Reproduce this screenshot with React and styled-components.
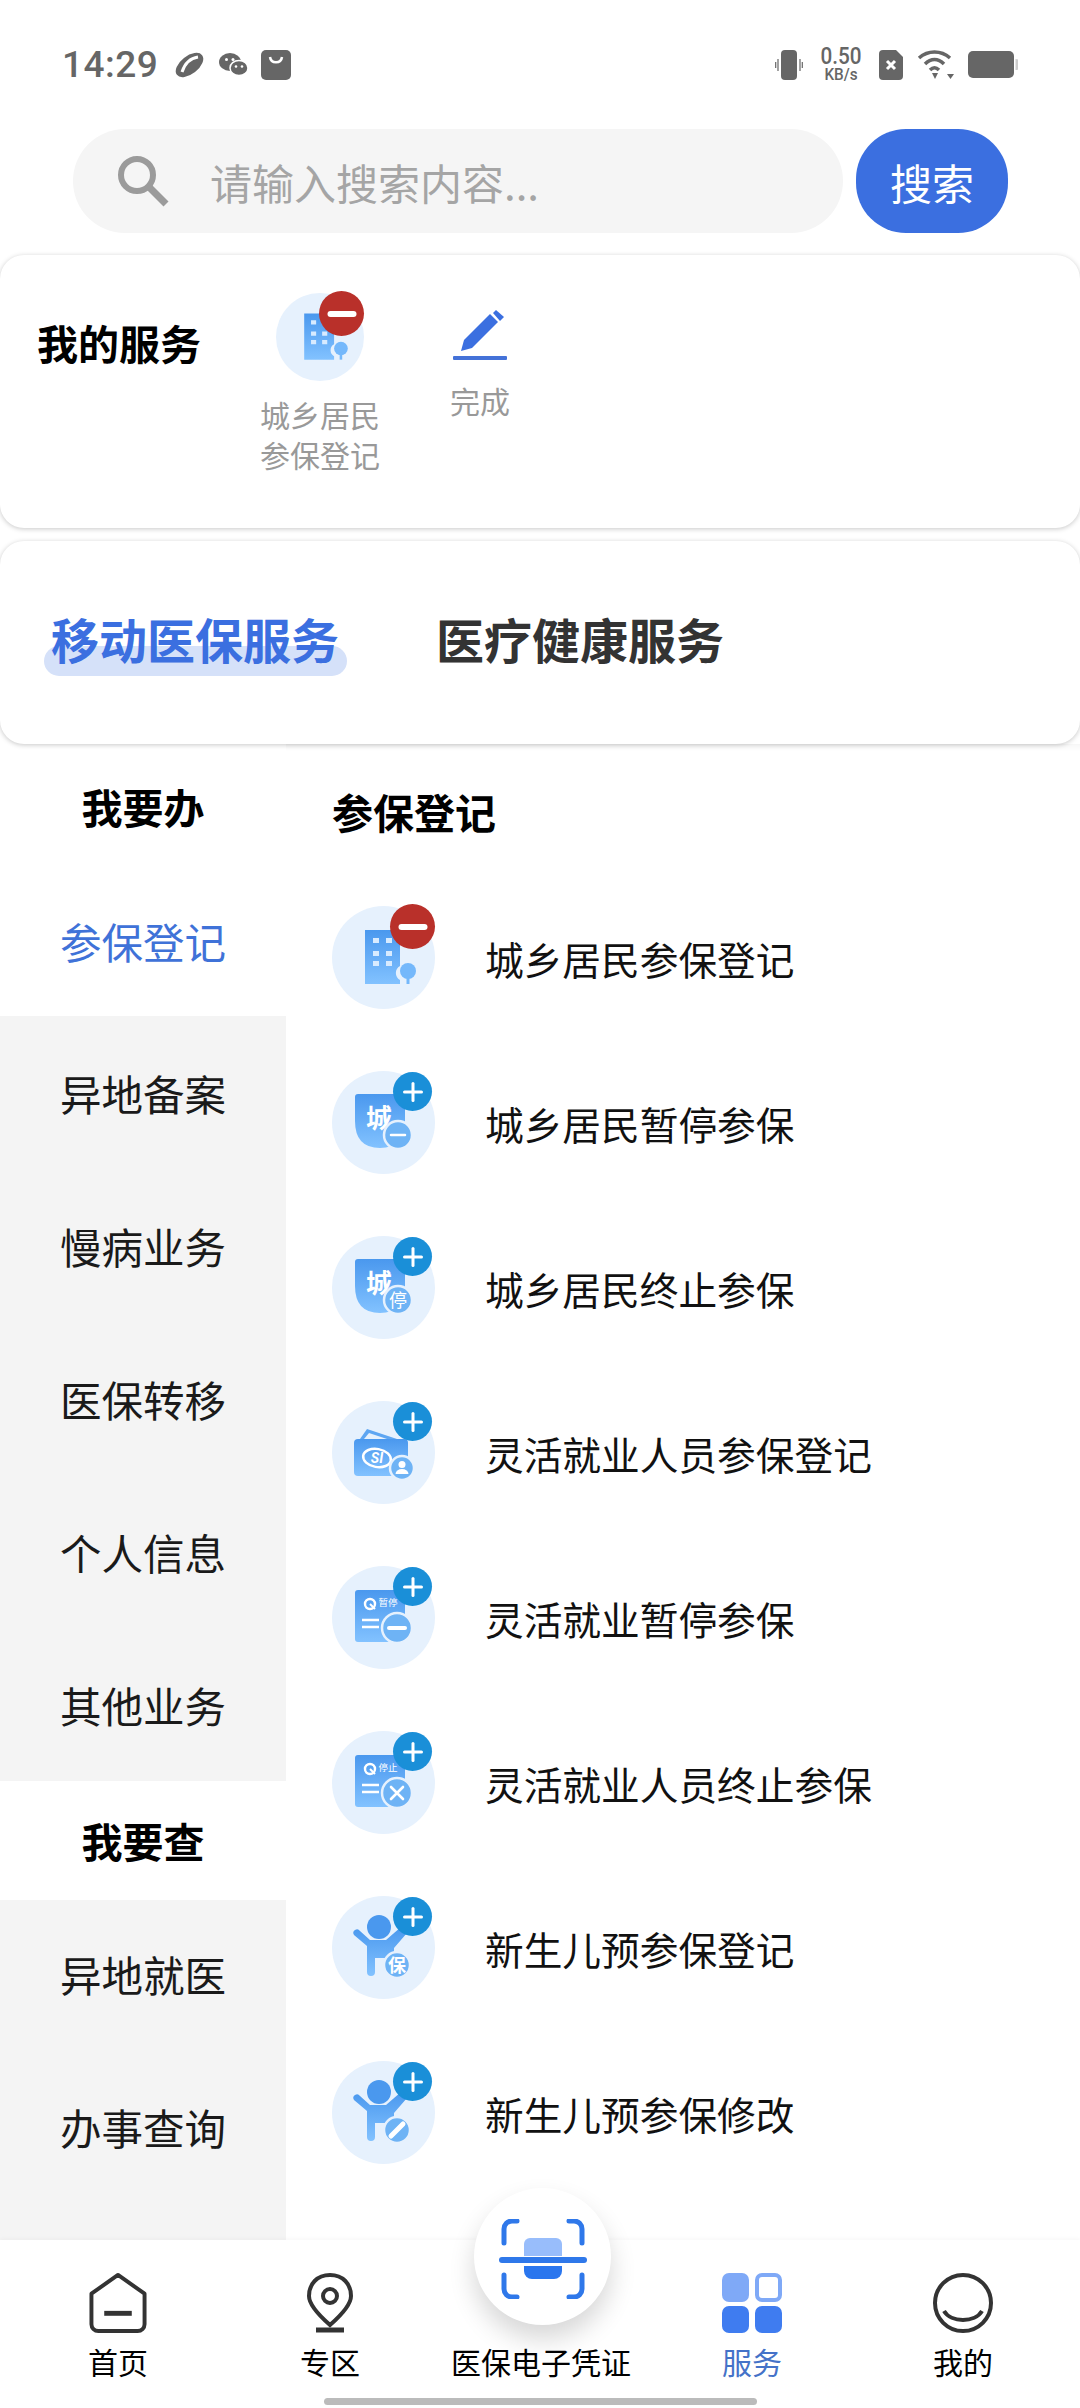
import React from "react";
import styled, { createGlobalStyle } from "styled-components";

const BLUE = "#3b6fe0";
const CJK = `"Noto Sans CJK SC", "Noto Sans", sans-serif`;

const GlobalStyle = createGlobalStyle`
  html, body {
    margin: 0;
    padding: 0;
    background: #fff;
  }
  * {
    box-sizing: border-box;
  }
`;

const Page = styled.div`
  position: relative;
  width: 1080px;
  height: 2408px;
  display: flex;
  flex-direction: column;
  overflow: hidden;
  background: #fff;
  font-family: ${CJK};
`;

const StatusBar = styled.div`
  flex: none;
  height: 129px;
  display: flex;
  align-items: center;
  justify-content: space-between;
  padding: 0 62px;
  color: #666;
`;

const StatusGroup = styled.div`
  display: flex;
  align-items: center;
  gap: ${(p) => p.$gap || 13}px;
`;

const Clock = styled.span`
  font-family: Roboto, sans-serif;
  font-size: 37px;
  font-weight: 500;
  letter-spacing: 0.5px;
  margin-right: 2px;
`;

const Speed = styled.div`
  font-family: Roboto, sans-serif;
  font-weight: 500;
  display: flex;
  flex-direction: column;
  align-items: center;
  width: 48px;
  line-height: 20px;
  font-size: 23px;
  white-space: nowrap;
  transform: scaleX(0.9);

  small {
    font-size: 17px;
    line-height: 15px;
  }
`;

const SearchRow = styled.div`
  flex: none;
  height: 104px;
  display: flex;
  gap: 13px;
  padding: 0 72px 0 73px;
`;

const SearchBox = styled.div`
  flex: 1;
  display: flex;
  align-items: center;
  gap: 41px;
  padding-left: 44px;
  background: #f5f5f5;
  border-radius: 52px;
  color: #a5a5a5;
  font-size: 42px;
`;

const SearchButton = styled.button`
  width: 152px;
  border: none;
  padding: 0;
  background: ${BLUE};
  border-radius: 50px;
  color: #fff;
  font-family: ${CJK};
  font-size: 42px;
`;

const Card = styled.section`
  flex: none;
  height: ${(p) => p.$height}px;
  margin-top: ${(p) => p.$top}px;
  background: #fff;
  border-radius: 24px;
  box-shadow: 0 1px 5px rgba(0, 0, 0, 0.22);
  position: relative;
`;

const MyServiceCard = styled(Card)`
  display: flex;
  padding-left: 37px;
  gap: 20px;
`;

const MyServiceTitle = styled.h2`
  margin: 0 29px 0 0;
  padding-top: 57px;
  width: 164px;
  font-size: 41px;
  line-height: 60px;
  font-weight: 700;
  color: #000;
  white-space: nowrap;
`;

const ServiceTile = styled.div`
  width: 140px;
  display: flex;
  flex-direction: column;
  align-items: center;
  padding-top: ${(p) => p.$top}px;
`;

const TileLabel = styled.div`
  margin-top: ${(p) => p.$gap}px;
  font-size: 30px;
  line-height: 40px;
  color: #999;
  text-align: center;
`;

const TabsCard = styled(Card)`
  display: flex;
  align-items: center;
  gap: 97px;
  padding: 0 0 10px 51px;
`;

const Tab = styled.div`
  position: relative;
  font-size: 48px;
  font-weight: 700;
  line-height: 64px;
  white-space: nowrap;
  color: ${(p) => (p.$active ? BLUE : "#333")};
  z-index: 0;

  ${(p) =>
    p.$active &&
    `
    &::after {
      content: "";
      position: absolute;
      left: -7px;
      right: -8px;
      bottom: -6px;
      height: 30px;
      border-radius: 15px;
      background: #d5e1f9;
      z-index: -1;
    }
  `}
`;

const Body = styled.div`
  flex: 1;
  min-height: 0;
  display: flex;
`;

const Sidebar = styled.nav`
  flex: none;
  width: 286px;
  background: #f4f4f4;
  display: flex;
  flex-direction: column;
`;

const SideHeading = styled.div`
  height: ${(p) => p.$height}px;
  display: flex;
  align-items: center;
  justify-content: center;
  padding-bottom: ${(p) => p.$pad || 0}px;
  background: #fff;
  color: #000;
  font-size: 41px;
  font-weight: 700;
`;

const SideItem = styled.div`
  height: ${(p) => (p.$active ? 146 : 153)}px;
  display: flex;
  align-items: center;
  justify-content: center;
  padding-bottom: ${(p) => p.$pad || 0}px;
  background: ${(p) => (p.$active ? "#fff" : "transparent")};
  color: ${(p) => (p.$active ? "#3f72d8" : "#1a1a1a")};
  font-size: 41.500px;
`;

const ContentPane = styled.main`
  flex: 1;
  min-width: 0;
  padding: 40px 0 0 46px;
  overflow: hidden;
  box-shadow: inset 0 12px 10px -12px rgba(0, 0, 0, 0.07);
`;

const SectionTitle = styled.h3`
  margin: 0 0 37px;
  font-size: 41px;
  line-height: 54px;
  font-weight: 700;
  color: #000;
`;

const Row = styled.div`
  height: 165px;
  display: flex;
  align-items: center;
  gap: 50px;
`;

const RowText = styled.span`
  font-size: 38.700px;
  color: #111;
  white-space: nowrap;
`;

const IconWrap = styled.div`
  position: relative;
  flex: none;
  width: ${(p) => p.$size}px;
  height: ${(p) => p.$size}px;

  svg {
    display: block;
  }
`;

const Badge = styled.span`
  position: absolute;
  border-radius: 50%;
  width: ${(p) => (p.$remove ? 45 : 39)}px;
  height: ${(p) => (p.$remove ? 45 : 39)}px;
  top: ${(p) => (p.$remove ? -2 : 1)}px;
  right: ${(p) => (p.$remove ? 0 : 3)}px;
  background: ${(p) => (p.$remove ? "#b9302a" : "#1a8fd8")};

  &::before,
  &::after {
    content: "";
    position: absolute;
    left: 50%;
    top: 50%;
    border-radius: 3px;
    background: #fff;
    transform: translate(-50%, -50%);
  }

  &::before {
    width: ${(p) => (p.$remove ? 29 : 20)}px;
    height: ${(p) => (p.$remove ? 6 : 3)}px;
  }

  &::after {
    width: 3px;
    height: 20px;
    display: ${(p) => (p.$remove ? "none" : "block")};
  }
`;

const BottomNav = styled.footer`
  flex: none;
  height: 168px;
  display: grid;
  grid-template-columns: 236px 188px 234px 188px 234px;
  padding-top: 33px;
  background: #fff;
  box-shadow: 0 -1px 4px rgba(0, 0, 0, 0.04);
  position: relative;
  z-index: 1;
`;

const NavItem = styled.div`
  display: flex;
  flex-direction: column;
  align-items: center;
  height: 108px;
  justify-content: flex-end;
  gap: 8px;
  font-size: 30px;
  line-height: 40px;
  white-space: nowrap;
  color: ${(p) => (p.$active ? "#4472c8" : "#000")};
`;

const NavSpacer = styled.span`
  height: 60px;
`;

const ScanButton = styled.div`
  position: absolute;
  left: 474px;
  top: -52px;
  width: 137px;
  height: 137px;
  padding-top: 4px;
  border-radius: 50%;
  background: #fff;
  box-shadow: 0 14px 26px rgba(0, 0, 0, 0.16);
  display: flex;
  align-items: center;
  justify-content: center;
`;

const HomeBar = styled.div`
  position: absolute;
  left: 324px;
  bottom: 3px;
  width: 433px;
  height: 7px;
  border-radius: 4px;
  background: #bbb;
`;

const Grad = () => (
  <defs>
    <linearGradient id="svcGrad" x1="0" y1="0" x2="0" y2="1">
      <stop offset="0" stopColor="#4a98ee" />
      <stop offset="1" stopColor="#82c2ff" />
    </linearGradient>
  </defs>
);

const SubCircle = ({ cx, cy, r, children }) => (
  <g>
    <circle cx={cx} cy={cy} r={r} fill="#6eb3f5" stroke="#e6f1fd" strokeWidth="2.5" />
    {children}
  </g>
);

const shield = "M23 26q0-3 3-3H73V50Q73 77 48 77Q23 77 23 50Z";
const child = "M22 39a3.6 3.6 0 0 1 6-4L38 44H54L69 31L75 37L62 52V62H43V76a4 4 0 0 1-8 0V50Z";

const Glyph = ({ x, y, size, weight = 700, fill = "#fff", children }) => (
  <text x={x} y={y} fontSize={size} fontWeight={weight} fill={fill} textAnchor="middle" fontFamily={CJK}>
    {children}
  </text>
);

const formCard = (label, mark) => (
  <g>
    <rect x="23" y="24" width="50" height="52" rx="3" fill="url(#svcGrad)" />
    <circle cx="38" cy="38" r="5" fill="none" stroke="#fff" strokeWidth="2.4" />
    <path d="M38 38L43 43" stroke="#fff" strokeWidth="2" />
    <Glyph x="56" y="40" size="9.500" weight={400}>{label}</Glyph>
    <path d="M30 54H47M30 61H47" stroke="#fff" strokeWidth="2.4" />
    <SubCircle cx={65} cy={62} r={15}>{mark}</SubCircle>
  </g>
);

const artwork = {
  building: (
    <g>
      <path d="M33 24H68V60A8 8 0 0 0 68 74V78H33Z" fill="url(#svcGrad)" />
      <path
        d="M41 32h6v5h-6zM54 32h6v5h-6zM41 45h6v5h-6zM54 45h6v5h-6zM41 55h6v5h-6zM54 55h6v5h-6z"
        fill="#d8ebff"
      />
      <circle cx="76" cy="65" r="8" fill="#74b8fb" />
      <path d="M74.500 70h3v8h-3z" fill="#74b8fb" />
    </g>
  ),
  pause: (
    <g>
      <path d={shield} fill="url(#svcGrad)" />
      <Glyph x="47" y="57" size="26">城</Glyph>
      <SubCircle cx={66} cy={64} r={14}>
        <path d="M59 64H73" stroke="#fff" strokeWidth="2.5" strokeLinecap="round" />
      </SubCircle>
    </g>
  ),
  stop: (
    <g>
      <path d={shield} fill="url(#svcGrad)" />
      <Glyph x="47" y="57" size="26">城</Glyph>
      <SubCircle cx={66} cy={64} r={14}>
        <Glyph x="66" y="71" size="18" weight={400}>停</Glyph>
      </SubCircle>
    </g>
  ),
  wallet: (
    <g>
      <path d="M28 38L35 28L65 38Z" fill="#5ea6f2" />
      <path d="M32 38L37 32L55 38Z" fill="#e6f1fd" />
      <rect x="22" y="38" width="54" height="37" rx="4" fill="url(#svcGrad)" />
      <ellipse cx="45" cy="57" rx="14" ry="9" fill="none" stroke="#fff" strokeWidth="2.5" transform="rotate(10 45 57)" />
      <text x="45" y="62" fontSize="14" fontWeight="700" fontStyle="italic" fill="#fff" textAnchor="middle" fontFamily="Roboto, sans-serif">SI</text>
      <SubCircle cx={70} cy={67} r={12}>
        <circle cx="70" cy="63.500" r="3.500" fill="#fff" />
        <path d="M63.500 73a6.500 5 0 0 1 13 0Z" fill="#fff" />
      </SubCircle>
    </g>
  ),
  formPause: formCard(
    "暂停",
    <path d="M57 62H73" stroke="#fff" strokeWidth="4" strokeLinecap="round" />
  ),
  formStop: formCard(
    "停止",
    <path d="M59 56L71 68M71 56L59 68" stroke="#fff" strokeWidth="2.6" strokeLinecap="round" />
  ),
  childNew: (
    <g>
      <circle cx="47" cy="31" r="12" fill="#4a98ee" />
      <path d={child} fill="url(#svcGrad)" />
      <SubCircle cx={65} cy={69} r={13}>
        <Glyph x="65" y="75.500" size="18">保</Glyph>
      </SubCircle>
    </g>
  ),
  childEdit: (
    <g>
      <circle cx="47" cy="31" r="12" fill="#4a98ee" />
      <path d={child} fill="url(#svcGrad)" />
      <SubCircle cx={65} cy={69} r={13}>
        <path d="M59 75L71 63" stroke="#fff" strokeWidth="5" strokeLinecap="round" />
      </SubCircle>
    </g>
  ),
};

const ServiceIcon = ({ kind, size = 103, remove }) => (
  <IconWrap $size={size}>
    <svg width={size} height={size} viewBox="0 0 103 103">
      <Grad />
      <circle cx="51.500" cy="51.500" r="51.500" fill="#e6f1fd" />
      {artwork[kind]}
    </svg>
    <Badge $remove={remove} />
  </IconWrap>
);

const SearchIcon = () => (
  <svg width="52" height="52" viewBox="0 0 52 52" fill="none" stroke="#9b9b9b">
    <circle cx="20" cy="20" r="16" strokeWidth="6" />
    <path d="M32 32L49 49" strokeWidth="7" />
  </svg>
);

const PenIcon = () => (
  <svg width="56" height="52" viewBox="0 0 56 52">
    <path d="M12 30L38 4L46 12L20 38L9 41Z" fill={BLUE} />
    <path d="M41 3L44 0L52 7L48 11Z" fill={BLUE} />
    <rect x="1" y="46" width="54" height="4" rx="1" fill="#4472d8" />
  </svg>
);

const StatusIcons = {
  rugby: (
    <svg width="33" height="26" viewBox="0 0 33 26">
      <ellipse cx="16.500" cy="13" rx="16" ry="9" transform="rotate(-38 16.500 13)" fill="#666" />
      <path d="M9 20C12 11 18 6 25 5" stroke="#fff" strokeWidth="3" fill="none" />
    </svg>
  ),
  wechat: (
    <svg width="29" height="24" viewBox="0 0 29 24" fill="#666">
      <ellipse cx="11" cy="9" rx="11" ry="9" />
      <ellipse cx="20" cy="15" rx="9" ry="7.500" stroke="#fff" strokeWidth="1.500" />
      <circle cx="7.500" cy="6.500" r="1.500" fill="#fff" />
      <circle cx="14" cy="6.500" r="1.500" fill="#fff" />
      <circle cx="17" cy="13.500" r="1.300" fill="#fff" />
      <circle cx="23" cy="13.500" r="1.300" fill="#fff" />
    </svg>
  ),
  bag: (
    <svg width="30" height="30" viewBox="0 0 30 30">
      <rect width="30" height="30" rx="5" fill="#666" />
      <path d="M9 7C10 14 20 14 21 7" stroke="#fff" strokeWidth="2.500" fill="none" />
    </svg>
  ),
  vibrate: (
    <svg width="28" height="30" viewBox="0 0 28 30">
      <rect x="6" width="16" height="30" rx="4" fill="#666" />
      <path d="M3 9V21M0.700 12V18M25 9V21M27.300 12V18" stroke="#666" strokeWidth="1.200" />
    </svg>
  ),
  sim: (
    <svg width="24" height="30" viewBox="0 0 24 30">
      <path d="M4 0H17L24 7V26a4 4 0 0 1-4 4H4a4 4 0 0 1-4-4V4a4 4 0 0 1 4-4Z" fill="#666" />
      <path d="M8 11L16 19M16 11L8 19" stroke="#fff" strokeWidth="3" />
    </svg>
  ),
  wifi: (
    <svg width="37" height="29" viewBox="0 0 37 29" fill="none" stroke="#666" strokeWidth="3.500">
      <path d="M2 8C11 0 24 0 33 8" />
      <path d="M8 14C14 8 21 8 27 14" />
      <path d="M13 20C16 17 19 17 22 20" />
      <path d="M15 23H21L18 29Z" fill="#666" stroke="none" />
      <path d="M30 24H37L33.500 29Z" fill="#666" stroke="none" />
    </svg>
  ),
  battery: (
    <svg width="50" height="27" viewBox="0 0 50 27">
      <rect width="46" height="27" rx="5" fill="#666" />
      <path d="M47.500 8a5 5 0 0 1 0 11Z" fill="#ccc" />
    </svg>
  ),
};

const NavIcons = {
  home: (
    <svg width="60" height="61" viewBox="0 0 60 61" fill="none" stroke="#333" strokeWidth="4">
      <path d="M30 2L57 21V52a7 7 0 0 1-7 7H10a7 7 0 0 1-7-7V21Z" strokeLinejoin="round" />
      <path d="M16 41H44" strokeWidth="5" />
    </svg>
  ),
  pin: (
    <svg width="60" height="60" viewBox="0 0 60 60" fill="none" stroke="#333" strokeWidth="4">
      <path d="M30 2C17 2 9 11 9 23C9 33 22 45 30 52C38 45 51 33 51 23C51 11 43 2 30 2Z" />
      <circle cx="30" cy="23" r="7" />
      <path d="M16 57H44" strokeWidth="5" />
    </svg>
  ),
  grid: (
    <svg width="60" height="60" viewBox="0 0 60 60">
      <rect x="0" y="0" width="27" height="29" rx="7" fill="#7fa9f7" />
      <rect x="35" y="2" width="23" height="25" rx="5" fill="#fff" stroke="#7fa9f7" strokeWidth="4" />
      <rect x="0" y="33" width="27" height="27" rx="7" fill="#3f7cf0" />
      <rect x="33" y="33" width="27" height="27" rx="7" fill="#3f7cf0" />
    </svg>
  ),
  face: (
    <svg width="60" height="60" viewBox="0 0 60 60" fill="none" stroke="#333" strokeWidth="4">
      <circle cx="30" cy="30" r="28" />
      <path d="M11 38C18 50 42 50 49 38" />
    </svg>
  ),
};

const ScanIcon = () => (
  <svg width="90" height="80" viewBox="0 0 90 80" fill="none">
    <path
      d="M19 2H14a8 8 0 0 0-8 8V24M71 2H76a8 8 0 0 1 8 8V24M6 56V70a8 8 0 0 0 8 8H19M84 56V70a8 8 0 0 1-8 8H71"
      stroke="#2f78ea"
      strokeWidth="5"
      strokeLinecap="round"
    />
    <path d="M26 37V25a6 6 0 0 1 6-6H58a6 6 0 0 1 6 6V37Z" fill="#98bdfb" />
    <rect x="1" y="38" width="88" height="6" rx="3" fill="#2f78ea" />
    <path d="M26 47H64V52a8 8 0 0 1-8 8H34a8 8 0 0 1-8-8Z" fill="#2a76ee" />
  </svg>
);

const services = [
  { name: "城乡居民参保登记", kind: "building", remove: true },
  { name: "城乡居民暂停参保", kind: "pause" },
  { name: "城乡居民终止参保", kind: "stop" },
  { name: "灵活就业人员参保登记", kind: "wallet" },
  { name: "灵活就业暂停参保", kind: "formPause" },
  { name: "灵活就业人员终止参保", kind: "formStop" },
  { name: "新生儿预参保登记", kind: "childNew" },
  { name: "新生儿预参保修改", kind: "childEdit" },
];

const doItems = ["异地备案", "慢病业务", "医保转移", "个人信息", "其他业务"];
const queryItems = ["异地就医", "办事查询"];

function Content() {
  return (
    <ContentPane>
      <SectionTitle>参保登记</SectionTitle>
      {services.map((s) => (
        <Row key={s.name}>
          <ServiceIcon kind={s.kind} remove={s.remove} />
          <RowText>{s.name}</RowText>
        </Row>
      ))}
    </ContentPane>
  );
}

function App() {
  return (
    <Page>
      <GlobalStyle />
      <StatusBar>
        <StatusGroup>
          <Clock>14:29</Clock>
          {StatusIcons.rugby}
          {StatusIcons.wechat}
          {StatusIcons.bag}
        </StatusGroup>
        <StatusGroup $gap={14}>
          {StatusIcons.vibrate}
          <Speed>
            0.50
            <small>KB/s</small>
          </Speed>
          {StatusIcons.sim}
          {StatusIcons.wifi}
          {StatusIcons.battery}
        </StatusGroup>
      </StatusBar>

      <SearchRow>
        <SearchBox>
          <SearchIcon />
          请输入搜索内容...
        </SearchBox>
        <SearchButton>搜索</SearchButton>
      </SearchRow>

      <MyServiceCard $height={273} $top={22}>
        <MyServiceTitle>我的服务</MyServiceTitle>
        <ServiceTile $top={38}>
          <ServiceIcon kind="building" size={88} remove />
          <TileLabel $gap={13}>
            城乡居民
            <br />
            参保登记
          </TileLabel>
        </ServiceTile>
        <ServiceTile $top={55}>
          <PenIcon />
          <TileLabel $gap={18}>完成</TileLabel>
        </ServiceTile>
      </MyServiceCard>

      <TabsCard $height={203} $top={13}>
        <Tab $active>移动医保服务</Tab>
        <Tab>医疗健康服务</Tab>
      </TabsCard>

      <Body>
        <Sidebar>
          <SideHeading $height={126} $pad={2}>我要办</SideHeading>
          <SideItem $active $pad={5}>参保登记</SideItem>
          {doItems.map((item) => (
            <SideItem key={item}>{item}</SideItem>
          ))}
          <SideHeading $height={119} $pad={2}>我要查</SideHeading>
          {queryItems.map((item) => (
            <SideItem key={item} $pad={5}>{item}</SideItem>
          ))}
        </Sidebar>
        <Content />
      </Body>

      <BottomNav>
        <NavItem>
          {NavIcons.home}
          首页
        </NavItem>
        <NavItem>
          {NavIcons.pin}
          专区
        </NavItem>
        <NavItem>
          <NavSpacer />
          医保电子凭证
        </NavItem>
        <NavItem $active>
          {NavIcons.grid}
          服务
        </NavItem>
        <NavItem>
          {NavIcons.face}
          我的
        </NavItem>
        <ScanButton>
          <ScanIcon />
        </ScanButton>
        <HomeBar />
      </BottomNav>
    </Page>
  );
}

export default App;
